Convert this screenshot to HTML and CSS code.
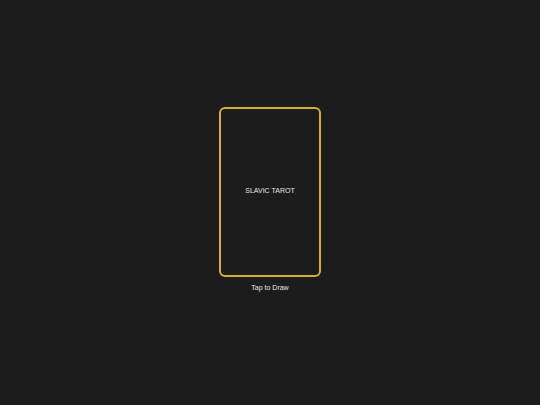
FILE: index.html
```html
<!DOCTYPE html>
<html>
<head>
<meta charset="utf-8">
<link rel="stylesheet" href="styles.css">
</head>
<body>
<main class="stage">
  <div class="card"><span class="card-title">SLAVIC TAROT</span></div>
  <p class="hint">Tap to Draw</p>
</main>
</body>
</html>
```
FILE: styles.css
```css
html, body {
  margin: 0;
  padding: 0;
  background: #1c1c1c;
  font-family: "Liberation Sans", Arial, sans-serif;
}
.stage {
  height: 405px;
  display: flex;
  flex-direction: column;
  align-items: center;
  justify-content: center;
  padding-bottom: 8px;
  box-sizing: border-box;
}
.card {
  width: 98px;
  height: 166px;
  border: 2px solid #d4af37;
  border-radius: 6px;
  display: flex;
  align-items: center;
  justify-content: center;
  padding-bottom: 2px;
  box-sizing: content-box;
  height: 164px;
  background: #1c1c1c;
}
.card-title {
  color: #e6e6e6;
  font-size: 7px;
}
.hint {
  margin: 7px 0 0;
  color: #e6e6e6;
  font-size: 7px;
}
```
